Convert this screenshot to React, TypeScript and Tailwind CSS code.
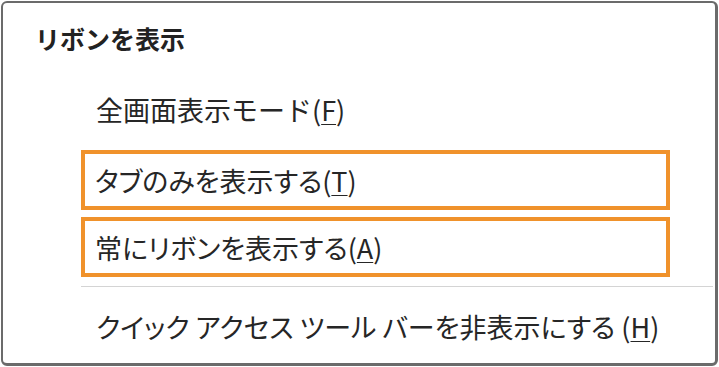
import { ReactNode } from "react";

const jp = "[font-family:'Noto_Sans_CJK_JP','Noto_Sans',sans-serif]";

const Key = ({ children }: { children: ReactNode }) => (
  <span className="underline underline-offset-[3px] decoration-1">{children}</span>
);

const Item = ({ children, boxed, prop }: { children: ReactNode; boxed?: boolean; prop?: boolean }) => (
  <div
    className={
      boxed
        ? "ml-[78px] mr-[45px] flex h-[60px] items-center border-4 border-[#f0922b] pl-[10px]"
        : "ml-[93px] flex h-[59px] items-center"
    }
  >
    <span className={`text-[27px] leading-none text-[#262626] ${prop ? "[font-feature-settings:'palt']" : ""}`}>
      {children}
    </span>
  </div>
);

export default function App() {
  return (
    <div className={`${jp} bg-white w-[719px] h-[367px] p-px`}>
      <div className="flex h-[365px] w-[717px] flex-col rounded-md border-2 border-r-[3px] border-b-[3px] border-[#6b6b6b] bg-white">
        <div className="pl-[32px] pt-[23px] text-[25px] font-bold leading-none text-[#222]">リボンを表示</div>
        <div className="mt-[29px]">
          <Item>
            全画面表示モード(<Key>F</Key>)
          </Item>
        </div>
        <div className="mt-[11px] flex flex-col gap-[7px]">
          <Item boxed prop>
            タブのみを表示する(<Key>T</Key>)
          </Item>
          <Item boxed prop>
            常にリボンを表示する(<Key>A</Key>)
          </Item>
        </div>
        <div className="ml-[78px] mr-[2px] mt-[9px] h-px bg-[#d4d4d4]" />
        <div className="mt-[10px]">
          <Item prop>
            クイック アクセス ツール バーを非表示にする (<Key>H</Key>)
          </Item>
        </div>
      </div>
    </div>
  );
}
